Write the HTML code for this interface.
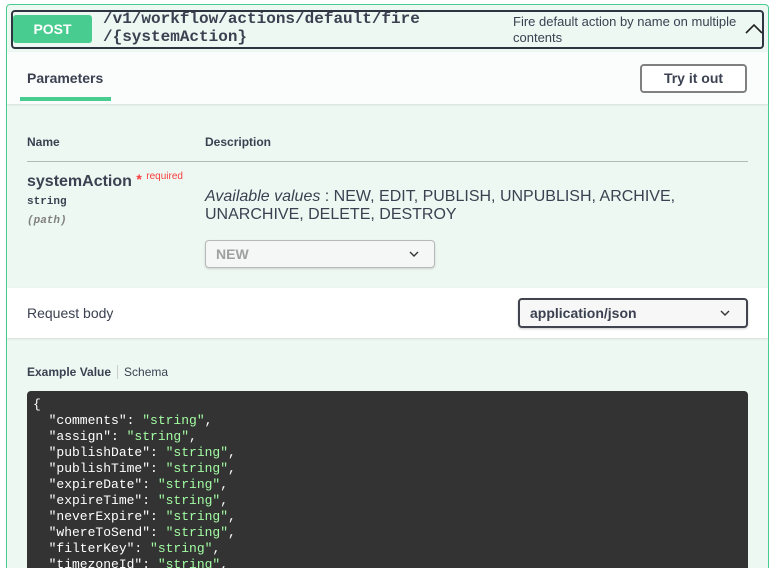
<!DOCTYPE html>
<html style="width:774px;height:568px;overflow:hidden"><head><meta charset="utf-8"><style>
*{box-sizing:border-box;margin:0;padding:0}
body{width:774px;height:568px;overflow:hidden;background:#fff;font-family:"Liberation Sans",sans-serif;color:#3b4151;position:relative}
.a{position:absolute}
.mono{font-family:"Liberation Mono",monospace}
</style></head><body>
<div class="a" style="left:6px;top:4px;width:763px;height:580px;border:1px solid #49cc90;border-radius:4px;background:#edf8f2"></div>
<div class="a" style="left:11px;top:10px;width:753px;height:39px;border:2px solid #2e3440;border-radius:4px;background:#edf8f2"></div>
<div class="a" style="left:13px;top:15px;width:79px;height:28px;background:#49cc90;border-radius:3px;color:#fff;font-weight:bold;font-size:14px;text-align:center;line-height:28px">POST</div>
<div class="a mono" style="left:103px;top:10px;font-size:16px;font-weight:bold;line-height:18px;color:#3b4151">/v1/workflow/actions/default/fire<br>/{systemAction}</div>
<div class="a" style="left:513px;top:14px;font-size:13px;line-height:16px;color:#3b4151">Fire default action by name on multiple<br>contents</div>
<svg class="a" style="left:745px;top:22px" width="18" height="14" viewBox="0 0 18 14"><path d="M1 11 L9 3 L17 11" fill="none" stroke="#222" stroke-width="1.6"/></svg>
<div class="a" style="left:7px;top:52px;width:761px;height:52px;background:#fbfdfc;box-shadow:0 1px 2px rgba(0,0,0,.1)"></div>
<div class="a" style="left:27px;top:70px;font-size:14px;font-weight:bold">Parameters</div>
<div class="a" style="left:20px;top:97px;width:91px;height:4px;background:#49cc90"></div>
<div class="a" style="left:640px;top:64px;width:107px;height:29px;border:2px solid #808080;border-radius:4px;background:#fff;font-size:14px;font-weight:bold;text-align:center;line-height:25px">Try it out</div>
<div class="a" style="left:27px;top:135px;font-size:12px;font-weight:bold">Name</div>
<div class="a" style="left:205px;top:135px;font-size:12px;font-weight:bold">Description</div>
<div class="a" style="left:27px;top:161px;width:721px;height:1px;background:#b0bbb6"></div>
<div class="a" style="left:27px;top:171px;font-size:16px;font-weight:bold">systemAction <span style="color:#f93e3e;font-size:14px;vertical-align:2px">*</span> <span style="color:#f93e3e;font-size:10px;font-weight:normal;vertical-align:7px">required</span></div>
<div class="a mono" style="left:27px;top:196px;font-size:11px;font-weight:bold">string</div>
<div class="a mono" style="left:27px;top:215px;font-size:11px;font-style:italic;font-weight:bold;color:#808080">(path)</div>
<div class="a" style="left:205px;top:188px;font-size:16px;line-height:18px">
<i>Available values</i> : NEW, EDIT, PUBLISH, UNPUBLISH, ARCHIVE,<br>UNARCHIVE, DELETE, DESTROY</div>
<div class="a" style="left:205px;top:240px;width:230px;height:28px;border:1px solid #b8b8b8;border-radius:4px;background:#f5f7f6;box-shadow:0 1px 2px rgba(0,0,0,.15);font-size:14px;font-weight:bold;color:#a0a0a0;padding-left:10px;line-height:26px">NEW</div>
<svg class="a" style="left:409px;top:250px" width="10" height="8"><path d="M1 2 L5 6 L9 2" fill="none" stroke="#333" stroke-width="1.4"/></svg>
<div class="a" style="left:7px;top:288px;width:761px;height:50px;background:#fff;box-shadow:0 1px 2px rgba(0,0,0,.1)"></div>
<div class="a" style="left:27px;top:305px;font-size:14px">Request body</div>
<div class="a" style="left:518px;top:298px;width:230px;height:30px;border:2px solid #41444e;border-radius:4px;background:#f7f7f7;box-shadow:0 1px 2px rgba(0,0,0,.2);font-size:14px;font-weight:bold;padding-left:10px;line-height:26px">application/json</div>
<svg class="a" style="left:720px;top:309px" width="10" height="8"><path d="M1 2 L5 6 L9 2" fill="none" stroke="#333" stroke-width="1.4"/></svg>
<div class="a" style="left:27px;top:365px;font-size:12px"><b>Example Value</b><span style="display:inline-block;width:1px;height:14px;background:#ccc;margin:0 6px -3px"></span>Schema</div>
<div class="a" style="left:27px;top:391px;width:721px;height:200px;background:#333;border-radius:4px"></div>
<pre class="a mono" style="left:33px;top:397px;font-size:13px;line-height:16px;color:#fff">{
  "comments": <span style="color:#a2fca2">"string"</span>,
  "assign": <span style="color:#a2fca2">"string"</span>,
  "publishDate": <span style="color:#a2fca2">"string"</span>,
  "publishTime": <span style="color:#a2fca2">"string"</span>,
  "expireDate": <span style="color:#a2fca2">"string"</span>,
  "expireTime": <span style="color:#a2fca2">"string"</span>,
  "neverExpire": <span style="color:#a2fca2">"string"</span>,
  "whereToSend": <span style="color:#a2fca2">"string"</span>,
  "filterKey": <span style="color:#a2fca2">"string"</span>,
  "timezoneId": <span style="color:#a2fca2">"string"</span>,</pre>
</body></html>
